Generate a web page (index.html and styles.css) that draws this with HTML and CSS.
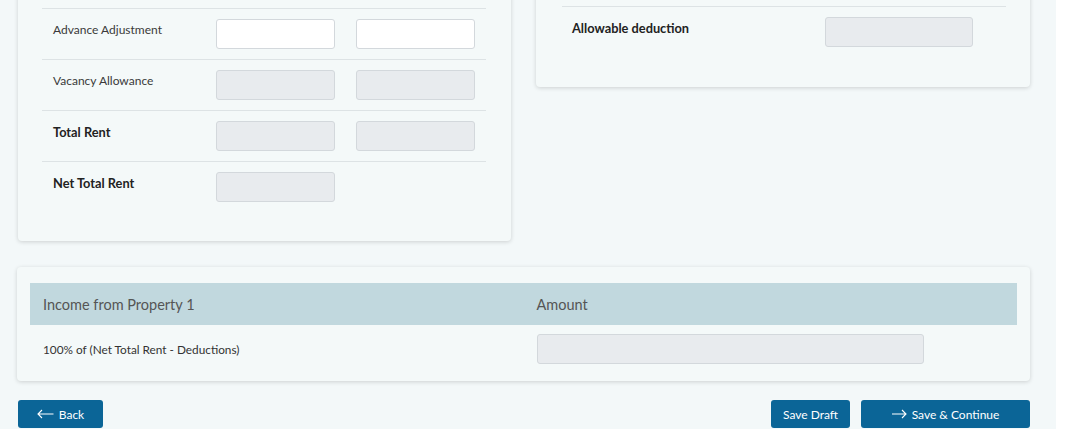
FILE: index.html
```html
<!DOCTYPE html>
<html lang="en">
<head>
<meta charset="utf-8">
<title>Income from House Property</title>
<link rel="stylesheet" href="styles.css">
</head>
<body>
<div class="page">
  <main class="content">
    <div class="top-row">
      <section class="card card-left">
        <div class="form-row">
          <span class="label">Advance Adjustment</span>
          <input class="field" type="text">
          <input class="field" type="text">
        </div>
        <div class="form-row">
          <span class="label">Vacancy Allowance</span>
          <input class="field" type="text" disabled>
          <input class="field" type="text" disabled>
        </div>
        <div class="form-row">
          <span class="label bold">Total Rent</span>
          <input class="field" type="text" disabled>
          <input class="field" type="text" disabled>
        </div>
        <div class="form-row">
          <span class="label bold">Net Total Rent</span>
          <input class="field" type="text" disabled>
        </div>
      </section>
      <section class="card card-right">
        <div class="form-row right-row">
          <span class="label bold">Allowable deduction</span>
          <input class="field field-wide" type="text" disabled>
        </div>
      </section>
    </div>

    <section class="card card-income">
      <div class="income-head">
        <div class="col">Income from Property 1</div>
        <div class="col">Amount</div>
      </div>
      <div class="income-row">
        <div class="col cell-label">100% of (Net Total Rent - Deductions)</div>
        <div class="col"><input class="field field-amount" type="text" disabled></div>
      </div>
    </section>

    <div class="actions">
      <button class="btn btn-back"><svg class="arrow" width="17" height="10" viewBox="0 0 17 10"><path d="M16.5 5H1M5 1 1 5l4 4" fill="none" stroke="#fff" stroke-width="1.1"/></svg>Back</button>
      <div class="actions-right">
        <button class="btn btn-draft">Save Draft</button>
        <button class="btn btn-continue"><svg class="arrow" width="15" height="10" viewBox="0 0 15 10"><path d="M0 5h14M10 1l4 4-4 4" fill="none" stroke="#fff" stroke-width="1.1"/></svg>Save &amp; Continue</button>
      </div>
    </div>
  </main>
  <div class="gutter"></div>
</div>
</body>
</html>
```

FILE: styles.css
```css
* { box-sizing: border-box; }
html, body { margin: 0; padding: 0; background: #ffffff; }
body {
  font-family: "Lato", "Open Sans", sans-serif;
  color: #333;
  overflow: hidden;
}
.page {
  display: flex;
  width: 1078px;
  height: 429px;
  overflow: hidden;
}
.content {
  width: 1056px;
  background: #f3f8f9;
  padding: 0 26px 0 17px;
}
.gutter { flex: 1; background: #ffffff; }

.top-row {
  display: flex;
  gap: 25px;
  margin-top: -41px;
  align-items: flex-start;
  padding-left: 1px;
}
.card {
  background: #f4f9f9;
  border-radius: 4px;
  box-shadow: 0 1px 4px rgba(0, 0, 0, 0.16);
}
.card-left {
  width: 493px;
  padding: 49px 25px 29px 24px;
}
.card-right {
  width: 494px;
  padding: 47px 24px 40px 26px;
}
.form-row {
  display: flex;
  align-items: flex-start;
  padding: 10px 11px 10px 11px;
  border-top: 1px solid #dde3e5;
  gap: 21px;
  height: 51px;
}
.form-row .label {
  flex: 0 0 142px;
  font-size: 12px;
  line-height: 20px;
  padding-top: 1px;
  color: #3a3a3a;
}
.form-row .label.bold { font-size: 12.8px; font-weight: 700; color: #222; }
.field {
  flex: 0 0 auto;
  width: 119px;
  height: 30px;
  border: 1px solid #d3d8dc;
  border-radius: 3px;
  background: #ffffff;
  font: inherit;
  padding: 0 8px;
}
.field:disabled { background: #e8ebee; }
.right-row { gap: 0; padding-left: 10px; height: auto; padding-bottom: 0; }
.right-row .label { flex: 0 0 253px; }
.field-wide { width: 148px; height: 30px; }

.card-income {
  margin-top: 26px;
  padding: 16px 13px 17px 13px;
}
.income-head {
  display: flex;
  background: #c1d8de;
  height: 42px;
  align-items: center;
  color: #555;
  font-size: 14.5px;
}
.income-head .col, .income-row .col { width: 50%; padding-left: 13px; }
.income-row {
  display: flex;
  align-items: center;
  padding-top: 9px;
}
.cell-label { font-size: 11.8px; color: #333; }
.field-amount { width: 387px; height: 30px; }

.actions {
  display: flex;
  justify-content: space-between;
  margin-top: 19px;
  padding-left: 1px;
}
.actions-right { display: flex; gap: 11px; }
.btn {
  display: flex;
  align-items: center;
  justify-content: center;
  height: 28px;
  border: none;
  border-radius: 3px;
  background: #0b6597;
  color: #ffffff;
  font-family: inherit;
  font-size: 12px;
  padding: 0;
  cursor: pointer;
}
.btn-back { width: 85px; }
.btn-draft { width: 79px; }
.btn-continue { width: 169px; }
.arrow { margin-right: 5px; }
```
